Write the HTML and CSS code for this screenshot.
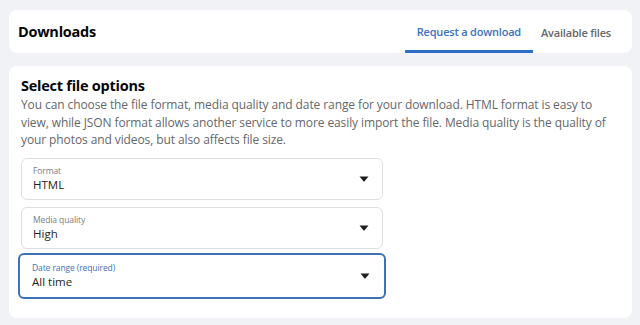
FILE: index.html
```html
<!DOCTYPE html>
<html>
<head>
<meta charset="utf-8">
<link rel="stylesheet" href="styles.css">
</head>
<body>
<div class="page">
  <header class="card header">
    <h1 class="title">Downloads</h1>
    <nav class="tabs">
      <a class="tab active">Request a download</a>
      <a class="tab">Available files</a>
    </nav>
  </header>
  <section class="card main">
    <h2 class="section-title">Select file options</h2>
    <p class="desc">You can choose the file format, media quality and date range for your download. HTML format is easy to view, while JSON format allows another service to more easily import the file. Media quality is the quality of your photos and videos, but also affects file size.</p>
    <div class="fields">
      <div class="select">
        <div class="select-text">
          <span class="label">Format</span>
          <span class="value">HTML</span>
        </div>
        <svg class="caret" width="10" height="6" viewBox="0 0 10 6"><path d="M0.5 0.5h9L5.6 5.2a0.8 0.8 0 0 1-1.2 0z" fill="#1c1e21"/></svg>
      </div>
      <div class="select">
        <div class="select-text">
          <span class="label">Media quality</span>
          <span class="value">High</span>
        </div>
        <svg class="caret" width="10" height="6" viewBox="0 0 10 6"><path d="M0.5 0.5h9L5.6 5.2a0.8 0.8 0 0 1-1.2 0z" fill="#1c1e21"/></svg>
      </div>
      <div class="select focused">
        <div class="select-text">
          <span class="label">Date range (required)</span>
          <span class="value">All time</span>
        </div>
        <svg class="caret" width="10" height="6" viewBox="0 0 10 6"><path d="M0.5 0.5h9L5.6 5.2a0.8 0.8 0 0 1-1.2 0z" fill="#1c1e21"/></svg>
      </div>
    </div>
  </section>
</div>
</body>
</html>
```
FILE: styles.css
```css
* { box-sizing: border-box; }
html, body { margin: 0; padding: 0; }
body {
  background: #f0f2f5;
  font-family: "Open Sans", "Noto Sans", sans-serif;
  color: #1c1e21;
  width: 640px;
  height: 325px;
  overflow: hidden;
}
.page {
  padding: 10px 8px 0 9px;
  display: flex;
  flex-direction: column;
  gap: 13px;
}
.card {
  background: #fff;
  border-radius: 8px;
}
.header {
  height: 43px;
  display: flex;
  align-items: stretch;
  justify-content: space-between;
  padding-left: 9px;
}
.title {
  margin: 0;
  font-size: 14.5px;
  letter-spacing: -0.25px;
  font-weight: 700;
  align-self: center;
  color: #050505;
}
.tabs {
  display: flex;
  align-items: stretch;
  padding-right: 21px;
  gap: 8px;
}
.tab {
  font-size: 11px;
  letter-spacing: -0.2px;
  font-weight: 600;
  color: #65676b;
  display: flex;
  align-items: center;
  padding-top: 2px;
}
.tab.active {
  color: #3b72c4;
  border-bottom: 3px solid #2e6fcb;
  padding: 2px 12px 0;
}
.main {
  height: 252px;
  padding: 10px 12px 0 12px;
}
.section-title {
  margin: 0;
  font-size: 14.5px;
  letter-spacing: -0.25px;
  font-weight: 700;
  line-height: 20px;
  color: #050505;
}
.desc {
  margin: 0 0 9px;
  font-size: 12px;
  letter-spacing: -0.1px;
  line-height: 17.5px;
  color: #65676b;
  width: 599px;
}
.fields {
  display: flex;
  flex-direction: column;
  gap: 7px;
  width: 362px;
}
.select {
  height: 42px;
  border: 1px solid #dddfe2;
  border-radius: 6px;
  display: flex;
  align-items: center;
  justify-content: space-between;
  padding: 0 13px 0 11px;
}
.select.focused {
  margin: 0 -3px;
  height: 46px;
  border: 2px solid #3d72b5;
  padding: 0 14px 0 12px;
  margin-top: -3px;
}
.select-text {
  display: flex;
  flex-direction: column;
}
.label {
  font-size: 8.5px;
  letter-spacing: -0.1px;
  line-height: 12px;
  color: #7a7d82;
}
.focused .label { color: #3d72b5; }
.value {
  font-size: 11.5px;
  line-height: 16px;
  color: #1c1e21;
}
.caret { display: block; }
```
